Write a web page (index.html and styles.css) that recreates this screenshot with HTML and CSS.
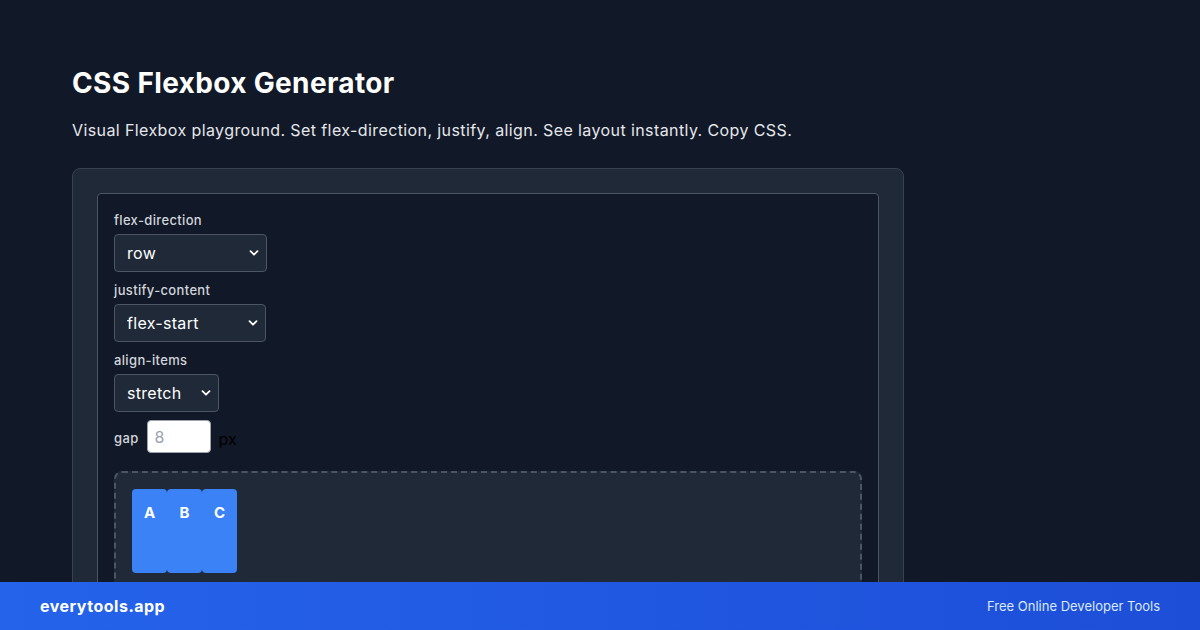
FILE: index.html
```html
<!DOCTYPE html>
<html lang="en">
<head>
<meta charset="utf-8">
<title>CSS Flexbox Generator</title>
<link rel="stylesheet" href="styles.css">
</head>
<body>
<main class="page">
  <h1 class="title">CSS Flexbox Generator</h1>
  <p class="subtitle">Visual Flexbox playground. Set flex-direction, justify, align. See layout instantly. Copy CSS.</p>
  <section class="card">
    <div class="panel">
      <div class="field">
        <label class="label">flex-direction</label>
        <span class="select-wrap sel-dir">
          <select class="select">
            <option>row</option><option>row-reverse</option><option>column</option><option>column-reverse</option>
          </select>
          <svg class="chev" width="10" height="6" viewBox="0 0 10 6"><path d="M1.5 1.2 5 4.7 8.5 1.2" fill="none" stroke="#fff" stroke-width="1.8" stroke-linecap="round" stroke-linejoin="round"/></svg>
        </span>
      </div>
      <div class="field">
        <label class="label">justify-content</label>
        <span class="select-wrap sel-justify">
          <select class="select">
            <option>flex-start</option><option>flex-end</option><option>center</option><option>space-between</option><option>space-around</option><option>space-evenly</option>
          </select>
          <svg class="chev" width="10" height="6" viewBox="0 0 10 6"><path d="M1.5 1.2 5 4.7 8.5 1.2" fill="none" stroke="#fff" stroke-width="1.8" stroke-linecap="round" stroke-linejoin="round"/></svg>
        </span>
      </div>
      <div class="field">
        <label class="label">align-items</label>
        <span class="select-wrap sel-align">
          <select class="select">
            <option>stretch</option><option>flex-start</option><option>flex-end</option><option>center</option><option>baseline</option>
          </select>
          <svg class="chev" width="10" height="6" viewBox="0 0 10 6"><path d="M1.5 1.2 5 4.7 8.5 1.2" fill="none" stroke="#fff" stroke-width="1.8" stroke-linecap="round" stroke-linejoin="round"/></svg>
        </span>
      </div>
      <div class="gap-row">
        <label class="label">gap</label>
        <input class="gap-input" type="text" placeholder="8">
        <span class="unit">px</span>
      </div>
      <div class="preview">
        <div class="item">A</div>
        <div class="item">B</div>
        <div class="item">C</div>
      </div>
    </div>
  </section>
</main>
<footer class="footer">
  <span class="brand">everytools.app</span>
  <span class="tagline">Free Online Developer Tools</span>
</footer>
</body>
</html>
```
FILE: styles.css
```css
* { box-sizing: border-box; }
html, body { margin: 0; padding: 0; }
body {
  background: #111827;
  font-family: Inter, "Noto Sans", "Liberation Sans", sans-serif;
  color: #f9fafb;
}
.page {
  padding: 66px 72px 0;
  width: 976px;
}
.title {
  margin: 0;
  font-size: 28px;
  line-height: 34px;
  font-weight: 700;
  color: #ffffff;
  letter-spacing: 0.35px;
}
.subtitle {
  margin: 18px 0 26px;
  font-size: 16px;
  line-height: 24px;
  color: #e5e7eb;
  letter-spacing: 0.4px;
}
.card {
  background: #1f2937;
  border: 1px solid #374151;
  border-radius: 8px;
  padding: 24px;
}
.panel {
  background: #111827;
  border: 1px solid #4b5563;
  border-radius: 4px;
  padding: 16px;
}
.field {
  display: flex;
  flex-direction: column;
  align-items: flex-start;
  margin-bottom: 8px;
}
.label {
  font-size: 13px;
  line-height: 20px;
  font-weight: 500;
  color: #d1d5db;
  margin-bottom: 4px;
  letter-spacing: 0.35px;
}
.select-wrap {
  position: relative;
  display: block;
  height: 38px;
}
.sel-dir { width: 153px; }
.sel-justify { width: 152px; }
.sel-align { width: 105px; }
.select {
  appearance: none;
  -webkit-appearance: none;
  width: 100%;
  height: 38px;
  background: #1f2937;
  border: 1px solid #4b5563;
  border-radius: 4px;
  color: #ffffff;
  font-family: inherit;
  font-size: 16px;
  letter-spacing: 0.3px;
  padding: 0 24px 0 12px;
}
.chev {
  position: absolute;
  right: 8px;
  top: 16px;
  pointer-events: none;
}
.gap-row {
  display: flex;
  align-items: baseline;
  gap: 8px;
  height: 33px;
}
.gap-row .label { margin: 0; }
.gap-input {
  width: 64px;
  height: 33px;
  border: 1px solid #9ca3af;
  border-radius: 4px;
  background: #ffffff;
  font-family: inherit;
  font-size: 16px;
  padding: 0 7px;
  color: #111827;
}
.gap-input::placeholder { color: #9ca3af; }
.unit {
  font-size: 16px;
  color: #000000;
  position: relative;
  top: 2px;
}
.preview {
  margin-top: 18px;
  display: flex;
  flex-direction: row;
  justify-content: flex-start;
  align-items: stretch;
  min-height: 120px;
  padding: 16px;
  background: #1f2937;
  border: 2px dashed #4b5563;
  border-radius: 8px;
}
.item {
  width: 35px;
  padding: 12px 0;
  text-align: center;
  background: #3b82f6;
  border-radius: 4px;
  color: #ffffff;
  font-weight: 700;
  font-size: 15px;
  line-height: 24px;
}
.footer {
  position: fixed;
  left: 0;
  right: 0;
  bottom: 0;
  height: 48px;
  display: flex;
  align-items: center;
  justify-content: space-between;
  padding: 0 40px;
  background: linear-gradient(90deg, #2563eb, #1d4ed8);
}
.brand {
  font-size: 16px;
  font-weight: 700;
  color: #ffffff;
  letter-spacing: 0.5px;
}
.tagline {
  font-size: 13px;
  color: #dbeafe;
}
```
